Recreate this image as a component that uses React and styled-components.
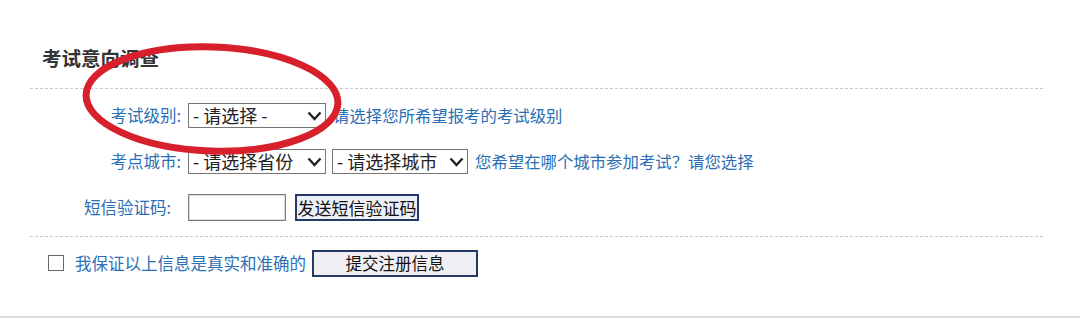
import styled, { createGlobalStyle } from "styled-components";

const GlobalStyle = createGlobalStyle`
  body {
    margin: 0;
    background: #fff;
    font-family: "Noto Sans CJK SC", "Liberation Sans", sans-serif;
  }
`;

const Page = styled.div`
  position: relative;
  width: 1080px;
  height: 325px;
  padding-top: 45px;
  box-sizing: border-box;
  overflow: hidden;
`;

const Title = styled.h3`
  margin: 0 0 17px 42px;
  font-size: 19.5px;
  line-height: 26px;
  font-weight: 700;
  color: #333;
`;

const Dashed = styled.div`
  margin-left: 30px;
  width: 1013px;
  border-top: 1px dashed #c8c8c8;
`;

const FormBlock = styled.div`
  padding: 3px 0 6px;
`;

const Row = styled.div`
  display: grid;
  grid-template-columns: 181px auto;
  column-gap: 7px;
  align-items: center;
  height: 46px;
`;

const Label = styled.label`
  text-align: right;
  font-size: 16.5px;
  color: #2a6fb5;
  padding-right: ${(p) => p.$pad || "0"};
`;

const Controls = styled.div`
  display: flex;
  align-items: center;
  gap: 6px;
`;

const SelectWrap = styled.div`
  position: relative;
  width: ${(p) => p.$width}px;
  height: 25px;
`;

const Select = styled.select`
  appearance: none;
  width: 100%;
  height: 100%;
  border: 1px solid #767676;
  border-radius: 0;
  background: #fff;
  padding: 0 0 0 4px;
  font-family: "Noto Sans CJK SC", "Liberation Sans", sans-serif;
  font-size: 18px;
  color: #222;
  line-height: 23px;
`;

const Chevron = styled.svg`
  position: absolute;
  right: 4px;
  top: 8px;
  pointer-events: none;
`;

const Hint = styled.span`
  margin-left: 1px;
  font-size: 16.4px;
  color: #2a6fb5;
`;

const TextInput = styled.input`
  width: 98px;
  height: 27px;
  box-sizing: border-box;
  border: 1px solid #7a7a7a;
  box-shadow: inset 0 0 0 1px #ddd;
  margin: 0;
`;

const Button = styled.button`
  height: 27px;
  width: ${(p) => p.$width}px;
  box-sizing: border-box;
  border: 2px solid #24396a;
  background: ${(p) => p.$bg || "#eef0f8"};
  color: #111;
  font-family: "Noto Sans CJK SC", "Liberation Sans", sans-serif;
  font-size: ${(p) => p.$size || "16.5px"};
  padding: 0;
  margin-left: ${(p) => p.$offset || "0"};
  line-height: 23px;
`;

const AgreeRow = styled.div`
  display: flex;
  align-items: center;
  height: 28px;
  margin-top: 12px;
  padding-left: 48px;
`;

const Check = styled.input`
  appearance: none;
  width: 16px;
  height: 16px;
  margin: 0 11px 0 0;
  border: 1.5px solid #666;
  background: #fff;
  box-sizing: border-box;
`;

const AgreeText = styled.span`
  font-size: 16.5px;
  color: #2a6fb5;
  margin-right: 6px;
`;

const BottomLine = styled.div`
  margin-top: 39px;
  height: 2px;
  background: #dedede;
`;

const Annotation = styled.svg`
  position: absolute;
  left: 0;
  top: 0;
  pointer-events: none;
`;

const ChevronIcon = () => (
  <Chevron width="15" height="10" viewBox="0 0 15 10">
    <path d="M1.5 1.5 L7.5 8 L13.5 1.5" fill="none" stroke="#222" strokeWidth="2.4" />
  </Chevron>
);

const Dropdown = ({ width, text }) => (
  <SelectWrap $width={width}>
    <Select defaultValue="">
      <option value="">{text}</option>
    </Select>
    <ChevronIcon />
  </SelectWrap>
);

const App = () => {
  return (
    <Page>
      <GlobalStyle />
      <Title>考试意向调查</Title>
      <Dashed />
      <FormBlock>
        <Row>
          <Label>考试级别:</Label>
          <Controls>
            <Dropdown width={138} text="- 请选择 -" />
            <Hint>请选择您所希望报考的考试级别</Hint>
          </Controls>
        </Row>
        <Row>
          <Label>考点城市:</Label>
          <Controls>
            <Dropdown width={138} text="- 请选择省份" />
            <Dropdown width={136} text="- 请选择城市" />
            <Hint>您希望在哪个城市参加考试？请您选择</Hint>
          </Controls>
        </Row>
        <Row>
          <Label $pad="10px">短信验证码:</Label>
          <Controls>
            <TextInput type="text" />
            <Button $width={124} $size="17px" $offset="3px">发送短信验证码</Button>
          </Controls>
        </Row>
      </FormBlock>
      <Dashed />
      <AgreeRow>
        <Check type="checkbox" />
        <AgreeText>我保证以上信息是真实和准确的</AgreeText>
        <Button $width={166} $bg="#f0f0f4">提交注册信息</Button>
      </AgreeRow>
      <BottomLine />
      <Annotation width="1080" height="325" viewBox="0 0 1080 325">
        <ellipse
          cx="212"
          cy="99"
          rx="126"
          ry="52"
          transform="rotate(2 212 99)"
          fill="none"
          stroke="#d7202b"
          strokeWidth="7"
        />
      </Annotation>
    </Page>
  );
};

export default App;
